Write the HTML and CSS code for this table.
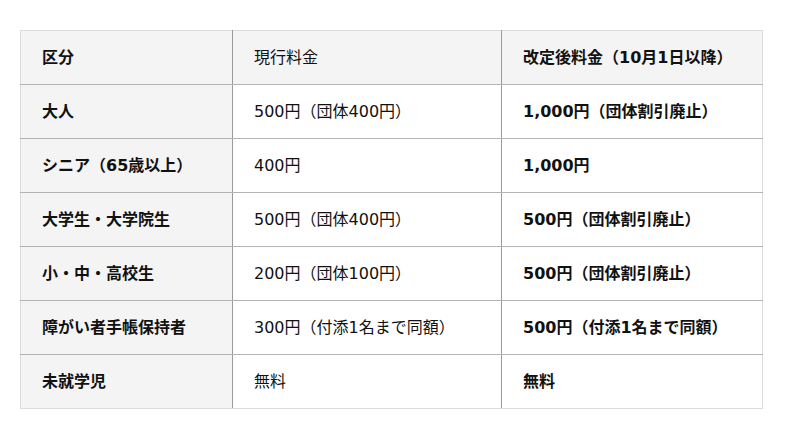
FILE: index.html
```html
<!DOCTYPE html>
<html lang="ja">
<head>
<meta charset="utf-8">
<link rel="stylesheet" href="styles.css">
</head>
<body>
<table class="fees">
  <colgroup>
    <col class="c1"><col class="c2"><col class="c3">
  </colgroup>
  <thead>
    <tr class="head">
      <th class="label">区分</th>
      <th class="cur">現行料金</th>
      <th class="new">改定後料金（10月1日以降）</th>
    </tr>
  </thead>
  <tbody>
    <tr><th class="label">大人</th><td>500円（団体400円）</td><td class="new">1,000円（団体割引廃止）</td></tr>
    <tr><th class="label">シニア（65歳以上）</th><td>400円</td><td class="new">1,000円</td></tr>
    <tr><th class="label">大学生・大学院生</th><td>500円（団体400円）</td><td class="new">500円（団体割引廃止）</td></tr>
    <tr><th class="label">小・中・高校生</th><td>200円（団体100円）</td><td class="new">500円（団体割引廃止）</td></tr>
    <tr><th class="label">障がい者手帳保持者</th><td>300円（付添1名まで同額）</td><td class="new">500円（付添1名まで同額）</td></tr>
    <tr><th class="label">未就学児</th><td>無料</td><td class="new">無料</td></tr>
  </tbody>
</table>
</body>
</html>
```
FILE: styles.css
```css
html, body {
  margin: 0;
  padding: 0;
  background: #fff;
}
body {
  padding: 30px 0 0 20px;
  font-family: "DejaVu Sans", "Noto Sans CJK JP", sans-serif;
  color: #111;
}
.fees {
  width: 742px;
  border-collapse: collapse;
  table-layout: fixed;
  font-size: 16px;
}
.c1 { width: 212px; }
.c2 { width: 269px; }
.c3 { width: 261px; }
.fees th, .fees td {
  height: 53px;
  padding: 0 0 0 21px;
  text-align: left;
  vertical-align: middle;
  border-top: 1px solid #b4b4b4;
  border-bottom: 1px solid #b4b4b4;
  border-left: 1px solid #9a9a9a;
  border-right: 1px solid #9a9a9a;
  line-height: 20px;
  font-weight: 400;
}
.fees tr > :first-child { border-left-color: #dcdcdc; }
.fees tr > :last-child { border-right-color: #dcdcdc; }
.fees thead th { border-top-color: #dcdcdc; }
.fees tbody tr:last-child > * { border-bottom-color: #dcdcdc; }
.fees .label,
.fees .new { font-weight: 700; }
.fees .head th,
.fees .label { background: #f4f4f4; }
```
